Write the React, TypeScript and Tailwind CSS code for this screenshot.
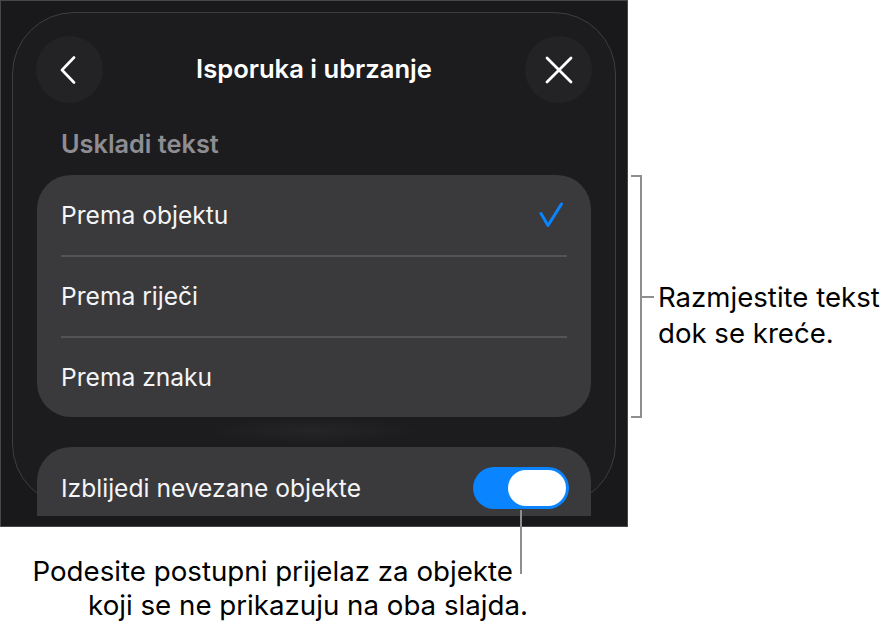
import React, { useState } from "react";

const font = { fontFamily: "Inter, 'Noto Sans', sans-serif" };

const options = ["Prema objektu", "Prema riječi", "Prema znaku"];

const ChevronLeft: React.FC = () => (
    <svg width="18" height="28" viewBox="0 0 18 28" fill="none">
        <path d="M15 1.5L3 14l12 12.5" stroke="white" strokeWidth="2.6" strokeLinecap="round" strokeLinejoin="round" />
    </svg>
);

const CloseIcon: React.FC = () => (
    <svg width="28" height="28" viewBox="0 0 28 28" fill="none">
        <path d="M2 2l24 24M26 2L2 26" stroke="white" strokeWidth="2.8" strokeLinecap="round" />
    </svg>
);

const Check: React.FC = () => (
    <svg width="24" height="26" viewBox="0 0 24 26" fill="none">
        <path d="M2 11.5l7 12L22.5 2" stroke="#0a84ff" strokeWidth="3" strokeLinecap="round" strokeLinejoin="round" />
    </svg>
);

const App: React.FC = () => {
    const [selected, setSelected] = useState(0);
    const [fade, setFade] = useState(true);

    return (
        <div className="relative flex w-[886px] h-[622px] bg-white overflow-hidden" style={font}>
            {/* left column: phone panel + bottom caption */}
            <div className="flex flex-col w-[628px]">
                <div className="w-[628px] h-[528px] bg-[#19191b] border border-[#48484a] p-[11px] overflow-hidden">
                    {/* sheet */}
                    <div className="w-[604px] h-[494px] rounded-[62px] border border-[#3e3e41] bg-[#1c1c1e] px-[23px] pt-[23px]">
                        {/* header */}
                        <div className="flex items-center justify-between h-[67px]">
                            <button className="w-[67px] h-[67px] rounded-full bg-[#232325] flex items-center justify-center pr-[3px]">
                                <ChevronLeft />
                            </button>
                            <div className="text-white text-[25.6px] font-semibold">Isporuka i ubrzanje</div>
                            <button className="w-[67px] h-[67px] rounded-full bg-[#232325] flex items-center justify-center">
                                <CloseIcon />
                            </button>
                        </div>

                        <div className="mt-[26px] ml-[25px] h-[30px] leading-[30px] text-[25.3px] font-semibold text-[#8d8d93]">
                            Uskladi tekst
                        </div>

                        {/* option list */}
                        <div className="mt-[16px] mx-[1px] rounded-[34px] bg-[#3a3a3c]">
                            {options.map((o, i) => (
                                <div key={o}>
                                    {i > 0 && <div className="mx-[24px] h-[2px] bg-[#545458]" />}
                                    <div
                                        className={`flex items-center justify-between pl-[24px] pr-[28px] ${i === 0 ? "h-[80px]" : "h-[79px]"}`}
                                        onClick={() => setSelected(i)}
                                    >
                                        <span className="text-[24.6px] text-[#f5f5f7]">{o}</span>
                                        {selected === i && <Check />}
                                    </div>
                                </div>
                            ))}
                        </div>

                        <div className="h-[30px] bg-[radial-gradient(ellipse_closest-side_at_50%_45%,rgba(255,255,255,0.04),transparent)] mx-[170px]" />

                        {/* toggle row */}
                        <div className="mx-[1px] h-[69px] rounded-t-[34px] bg-[#3a3a3c] flex items-start justify-between pl-[24px] pr-[22px] pt-[20px]">
                            <span className="text-[24.6px] leading-[42px] text-[#f5f5f7]">Izblijedi nevezane objekte</span>
                            <button
                                className={`w-[96px] h-[42px] rounded-full p-[3px] flex ${fade ? "bg-[#0a84ff] justify-end" : "bg-[#48484a] justify-start"}`}
                                onClick={() => setFade(!fade)}
                            >
                                <span className="w-[58px] h-[36px] rounded-full bg-white" />
                            </button>
                        </div>
                    </div>
                </div>

                {/* bottom caption */}
                <div className="flex flex-col items-end w-[528px] mt-[27px] text-[27.7px] leading-[34px] text-black">
                    <span className="mr-[15px]">Podesite postupni prijelaz za objekte</span>
                    <span>koji se ne prikazuju na oba slajda.</span>
                </div>
            </div>

            {/* callout line from the toggle */}
            <div className="absolute left-[520px] top-[510px] w-[2px] h-[64px] bg-[#8e8e8e]" />

            {/* right bracket callout */}
            <div className="flex items-start pt-[175px] pl-[3px]">
                <div className="w-[11px] h-[243px] border-t-2 border-b-2 border-r-2 border-[#8e8e8e]" />
                <div className="flex items-start mt-[104px]">
                    <div className="w-[12px] h-[2px] mt-[17px] bg-[#8e8e8e]" />
                    <div className="ml-[4px] text-[27.6px] leading-[36px] text-black whitespace-nowrap">
                        <div>Razmjestite tekst</div>
                        <div>dok se kreće.</div>
                    </div>
                </div>
            </div>
        </div>
    );
};

export default App;
